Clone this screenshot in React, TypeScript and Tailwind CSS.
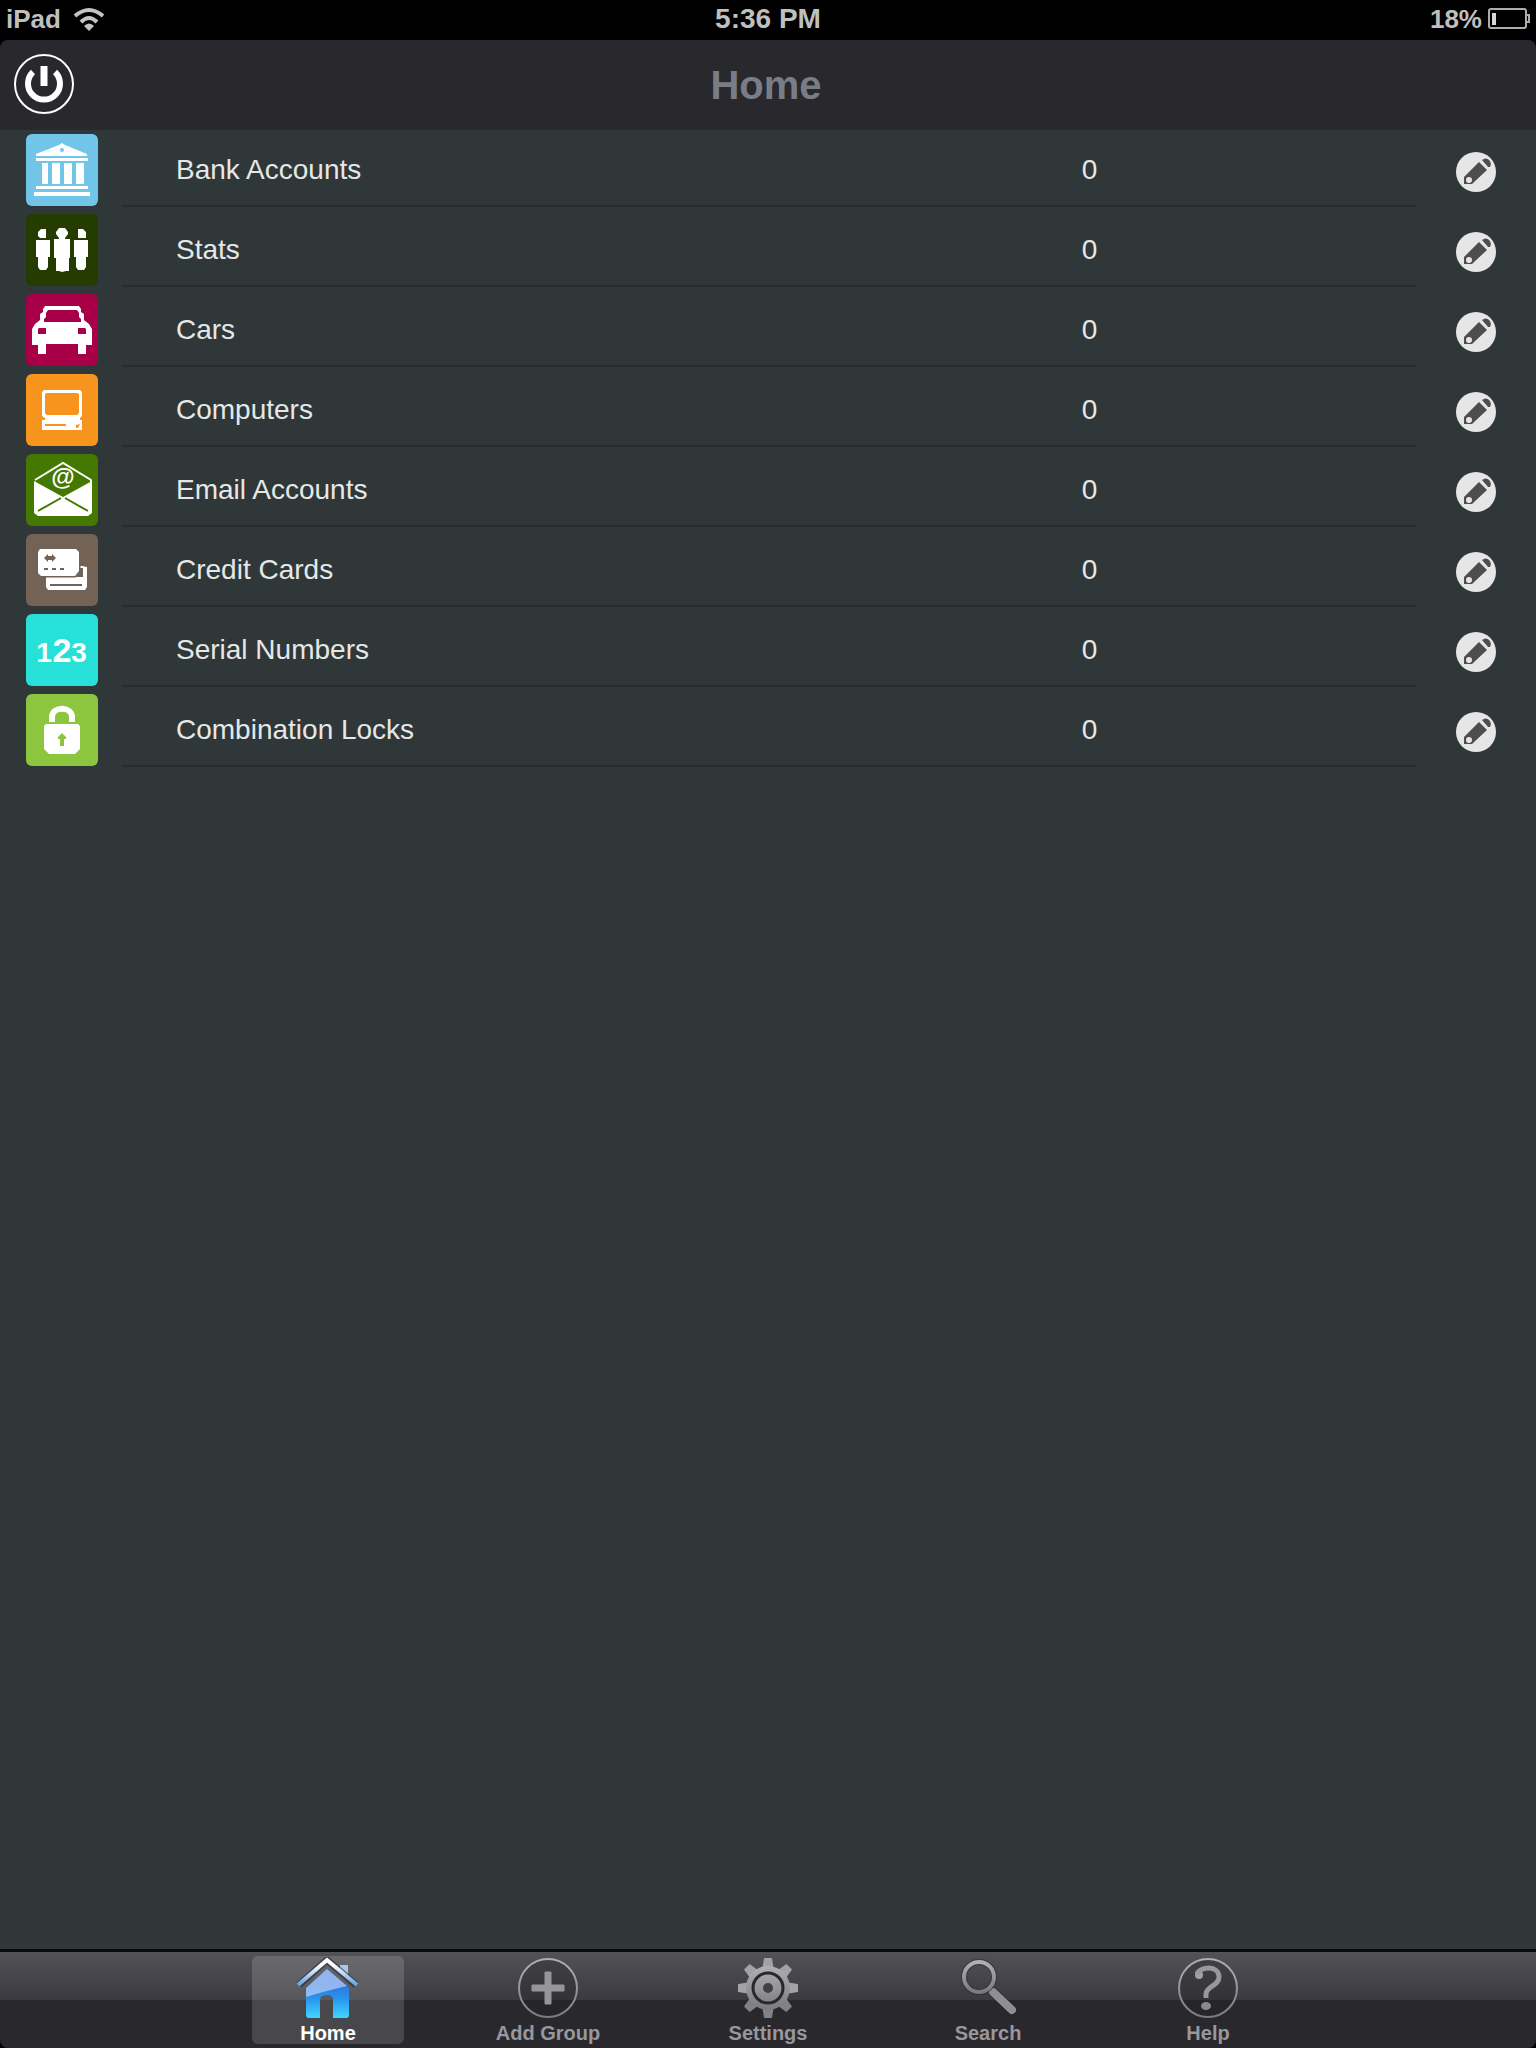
import React, { useState } from 'react';

const BankIcon = () => (
  <>
    <path d="M36 9 L39 11 L61 20 V22 H10 V20 L33 11Z" />
    <circle cx="36" cy="16" r="2" fill="#71c5e8" />
    <path d="M10 24H62V27H10Z M16 29H22V50H16Z M26 29H34V50H26Z M38 29H46V50H38Z M50 29H58V50H50Z M10 52H62V55H10Z M8 58H64V62H8Z" />
  </>
);

const StatsIcon = () => (
  <>
    <path d="M15 15H20V24H14L12 22V18Z M10 26H24V43H22V53L20 56H14L12 53V43H10Z" />
    <path d="M33 14H39L42 18V20L39 24V25H44V44H43V57H40L36 58L33 57H30V44H28V25H33V24L30 20V18Z" />
    <path d="M52 15H57L60 18V24H52Z M48 26H62V43H60V53L58 56H52L50 53V43H48Z" />
  </>
);

const CarIcon = () => (
  <path
    fillRule="evenodd"
    d="M19 12H53L55 15V18L58 20V26L63 30L66 35V51H60V60H52V50H20V60H12V51H6V35L9 30L14 26V20L17 18V15Z M22 16L20 19V23L18 25V28H55V25L53 23V19L51 16Z M12 35V40H20V34H13Z M52 34V40H60V35L59 34Z"
  />
);

const ComputerIcon = () => (
  <>
    <path fillRule="evenodd" d="M18 16H54L56 18V42L54 44V46H56V56H16V46H19V44L16 42V18Z M19 20V39L21 41H51L53 39V20L51 19H21Z" />
    <path d="M19 50H40V52H19Z M50 51L54 50L52 54H50Z" fill="#f7941e" />
  </>
);

const EmailIcon = () => (
  <>
    <path d="M9 26L37 9L65 26V30" fill="none" stroke="#fff" strokeWidth="2" />
    <path d="M8 27L37 43L66 27V59L62 62H12L8 59Z" />
    <path d="M12 57L35 44M39 44L62 57" stroke="#447800" strokeWidth="2" />
    <text x="37" y="31" textAnchor="middle" fontSize="24" fontWeight="bold" fontFamily="Liberation Sans, sans-serif">@</text>
  </>
);

const CardsIcon = () => (
  <>
    <path d="M20 32H56L61 33V53L59 56H22L20 53Z" />
    <path d="M24 50H56V52H24Z M50 34H57V43H50Z" fill="#736357" />
    <path d="M14 15H50L53 18V37L49 42H15L12 39V18Z" stroke="#736357" strokeWidth="3" paintOrder="stroke" />
    <path d="M18 24L22 20V22H26V20L30 24L26 28V26H22V28Z M18 34H22V36H18Z M26 34H30V36H26Z M34 34H38V36H34Z" fill="#736357" />
  </>
);

const NumbersIcon = () => (
  <g fontFamily="Liberation Sans, sans-serif" fontWeight="bold" textAnchor="middle">
    <text x="18" y="48" fontSize="28">1</text>
    <text x="36" y="48" fontSize="34">2</text>
    <text x="53" y="48" fontSize="28">3</text>
  </g>
);

const LockIcon = () => (
  <>
    <path d="M26 28V23C26 12 46 12 46 23V28" fill="none" stroke="#fff" strokeWidth="6" />
    <path d="M20 30H52L54 32V55L49 60H23L18 55V32Z" />
    <path d="M36 39L40 43V45H38V52H34V45H32V43Z" fill="#8cc63f" />
  </>
);

const groups = [
  { name: 'Bank Accounts', count: 0, color: 'bg-[#71c5e8]', Icon: BankIcon },
  { name: 'Stats', count: 0, color: 'bg-[#243c00]', Icon: StatsIcon },
  { name: 'Cars', count: 0, color: 'bg-[#a80048]', Icon: CarIcon },
  { name: 'Computers', count: 0, color: 'bg-[#f7941e]', Icon: ComputerIcon },
  { name: 'Email Accounts', count: 0, color: 'bg-[#447800]', Icon: EmailIcon },
  { name: 'Credit Cards', count: 0, color: 'bg-[#736357]', Icon: CardsIcon },
  { name: 'Serial Numbers', count: 0, color: 'bg-[#27e1d9]', Icon: NumbersIcon },
  { name: 'Combination Locks', count: 0, color: 'bg-[#8cc63f]', Icon: LockIcon },
];

const HomeTabIcon = () => (
  <>
    <path d="M43 8H51V22L43 15Z" fill="#a9c6ee" />
    <path d="M2 28L30 3L59 28" fill="none" stroke="#29282d" strokeOpacity="0.6" strokeWidth="7" />
    <path d="M1 28L30 3L60 28" fill="none" stroke="url(#roof)" strokeWidth="4" />
    <path d="M30 12L52 31V58Q52 61 49 61H36V43Q36 38 30 38Q23 38 23 43V61H12Q9 61 9 58V31Z" fill="url(#house)" />
    <path d="M30 12L50 29Q32 33 9 40V31Z" fill="#bcd0f8" fillOpacity="0.7" />
  </>
);

const AddTabIcon = () => (
  <>
    <circle cx="31" cy="31" r="29" fill="#202024" fillOpacity="0.3" stroke="url(#metal)" strokeWidth="2" />
    <path d="M28 15H34V28H47V34H34V47H28V34H15V28H28Z" fill="#96959a" stroke="#96959a" />
  </>
);

const SettingsTabIcon = () => (
  <>
    {[0, 45, 90, 135, 180, 225, 270, 315].map((angle) => (
      <path key={angle} d="M27 1H35L37 14H25Z" transform={`rotate(${angle} 31 31)`} fill={angle > 90 && angle < 270 ? '#828186' : '#a3a2a7'} />
    ))}
    <circle cx="31" cy="31" r="22" fill="url(#metal)" />
    <circle cx="31" cy="31" r="15" fill="none" stroke="#29282d" strokeWidth="3" />
    <circle cx="31" cy="31" r="5" fill="#414046" />
  </>
);

const SearchTabIcon = () => (
  <>
    <path d="M36 35L55 53" stroke="#29282d" strokeOpacity="0.6" strokeWidth="10" strokeLinecap="round" />
    <path d="M36 35L55 53" stroke="#8f8e93" strokeWidth="8" strokeLinecap="round" />
    <circle cx="22" cy="20" r="15" fill="none" stroke="#29282d" strokeOpacity="0.6" strokeWidth="6" />
    <circle cx="22" cy="20" r="15" fill="none" stroke="url(#metal)" strokeWidth="4" />
  </>
);

const HelpTabIcon = () => (
  <>
    <circle cx="31" cy="31" r="29" fill="#202024" fillOpacity="0.3" stroke="url(#metal)" strokeWidth="2" />
    <circle cx="22" cy="18" r="4" fill="#a3a2a7" />
    <path d="M20 17C23 9 42 8 42 20C42 29 29 29 29 37V41" fill="none" stroke="#98979c" strokeWidth="5" />
    <ellipse cx="29" cy="49" rx="5" ry="4" fill="#8a898e" />
  </>
);

const tabs = [
  { name: 'Home', Icon: HomeTabIcon },
  { name: 'Add Group', Icon: AddTabIcon },
  { name: 'Settings', Icon: SettingsTabIcon },
  { name: 'Search', Icon: SearchTabIcon },
  { name: 'Help', Icon: HelpTabIcon },
];

const StatusBar: React.FC = () => (
  <div className="grid h-10 grid-cols-3 items-start bg-black px-[6px] text-[26px] leading-[38px] font-bold text-[#bfbfbf]">
    <div className="flex items-center gap-3">
      <span>iPad</span>
      <svg width="32" height="24" viewBox="0 0 32 24" fill="none" stroke="#c4c4c4" strokeWidth="4" aria-hidden="true">
        <path d="M2 9Q16 -3 30 9" />
        <path d="M8 15Q16 7 24 15" />
        <path d="M16 24L11 19Q16 14 21 19Z" fill="#c4c4c4" stroke="none" />
      </svg>
    </div>
    <span className="text-center text-[28px]">5:36 PM</span>
    <div className="flex items-center justify-end gap-[6px]">
      <span>18%</span>
      <svg width="42" height="22" viewBox="0 0 42 22" fill="none" stroke="#adadad" strokeWidth="2" aria-hidden="true">
        <rect x="1" y="1" width="37" height="19" rx="2" />
        <path d="M38 7H41V14H38" />
        <path d="M4 5H8V17H4Z" fill="#d8d8d8" stroke="none" />
      </svg>
    </div>
  </div>
);

const Header: React.FC = () => (
  <div className="bg-black">
    <header className="grid h-[90px] grid-cols-[1fr_auto_1fr] items-center rounded-t-lg bg-[#29282d] pr-4 pl-3">
      <button type="button" aria-label="Log out" className="justify-self-start">
        <svg width="62" height="62" viewBox="-1 1 62 62" fill="none" stroke="#fff" className="block">
          <circle cx="31" cy="31" r="29" strokeWidth="2" />
          <path d="M20 19A16 16 0 1 0 42 19" strokeWidth="6" />
          <path d="M31 13V33" strokeWidth="7" />
        </svg>
      </button>
      <h1 className="text-[40px] leading-[48px] font-bold text-[#787d86]">Home</h1>
      <span />
    </header>
  </div>
);

const App: React.FC = () => {
  const [activeTab, setActiveTab] = useState('Home');

  return (
    <div className="flex min-h-screen flex-col bg-[#2f3739] font-['Liberation_Sans',Arial,sans-serif]">
      <StatusBar />
      <Header />

      <main className="flex-1">
        <ul>
          {groups.map(({ name, count, color, Icon }) => (
            <li key={name} className="flex h-20 items-start pr-10 pl-[26px]">
              <div className={`mt-1 h-[72px] w-[72px] shrink-0 overflow-hidden rounded-md ${color}`}>
                <svg width="72" height="72" viewBox="0 0 72 72" fill="#fff" aria-hidden="true">
                  <Icon />
                </svg>
              </div>
              <a href="#" className="ml-6 grid h-[77px] flex-1 grid-cols-2 items-center border-b-2 border-[#282c2f] pt-1 text-[28px] leading-9 text-[#e6e7e7]">
                <span className="pl-[54px]">{name}</span>
                <span className="pr-1.5 text-center">{count}</span>
              </a>
              <button type="button" aria-label={`Edit ${name}`} className="ml-10 flex h-20 items-center pt-1">
                <svg width="40" height="40" viewBox="0 0 40 40">
                  <circle cx="20" cy="20" r="20" fill="#e6e6e6" />
                  <path d="M8 32V25L23 10L31 18L16 32Z" fill="#4d4d4d" />
                  <path d="M26 8Q30 5 33 8Q36 11 34 15L32 15Z" fill="#4d4d4d" />
                  <circle cx="13" cy="28" r="3" fill="#e6e6e6" />
                </svg>
              </button>
            </li>
          ))}
        </ul>
      </main>

      <div className="bg-black">
        <nav className="flex justify-center gap-[68px] rounded-b-lg border-t-3 border-[#0b0b0d] bg-linear-to-b from-[#535257] from-0% via-[#3b3a40] via-50% to-[#29282d] to-50% py-1">
          {tabs.map(({ name, Icon }) => (
            <button
              key={name}
              type="button"
              onClick={() => setActiveTab(name)}
              className={`flex h-22 w-[152px] flex-col items-center gap-1 rounded-md pt-px ${activeTab === name ? 'bg-white/15 text-white' : 'text-[#98979c]'}`}
            >
              <svg width="62" height="62" viewBox="0 0 62 62" aria-hidden="true">
                <defs>
                  <linearGradient id="metal" x1="0" y1="0" x2="0" y2="1">
                    <stop offset="0" stopColor="#b0afb4" />
                    <stop offset="1" stopColor="#7b7a7f" />
                  </linearGradient>
                  <linearGradient id="roof" x1="0" y1="0" x2="0" y2="1">
                    <stop offset="0.2" stopColor="#ffffff" />
                    <stop offset="1" stopColor="#5fa4ea" />
                  </linearGradient>
                  <linearGradient id="house" x1="0" y1="0" x2="0" y2="1">
                    <stop offset="0.3" stopColor="#2b77dc" />
                    <stop offset="0.6" stopColor="#2a93ee" />
                    <stop offset="1" stopColor="#3fd6ff" />
                  </linearGradient>
                </defs>
                <Icon />
              </svg>
              <span className="text-xl leading-5 font-bold">{name}</span>
            </button>
          ))}
        </nav>
      </div>
    </div>
  );
};

export default App;
